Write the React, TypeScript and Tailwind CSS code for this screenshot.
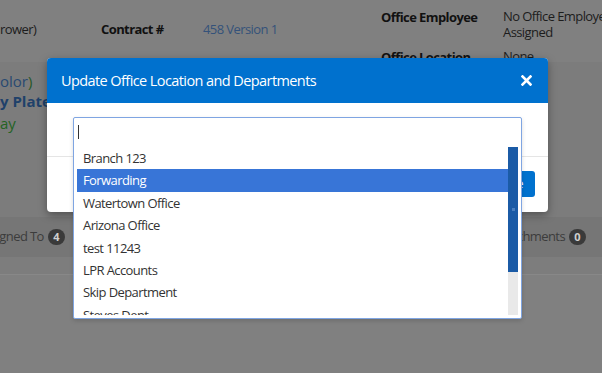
import React from "react";

const departments = [
  "Branch 123",
  "Forwarding",
  "Watertown Office",
  "Arizona Office",
  "test 11243",
  "LPR Accounts",
  "Skip Department",
  "Steves Dept",
  "Main Office",
];

export default function App() {
  return (
    <div className="relative w-[602px] h-[373px] overflow-hidden bg-[#808080] font-['Open_Sans',sans-serif] text-[13px] tracking-[-0.045em]">
      {/* page behind the overlay */}
      <div className="flex items-start h-[62px]">
        <div className="w-[101px] shrink-0 pt-[20px] leading-[18px] text-[#1c1c1c]">rower)</div>
        <div className="w-[102px] shrink-0 pt-[20px] leading-[18px] font-bold text-[#111]">Contract #</div>
        <div className="w-[178px] shrink-0 pt-[20px] leading-[18px] text-[#34527a]">458 Version 1</div>
        <div className="w-[122px] shrink-0 pt-[8px] leading-[18px] font-bold text-[#111]">
          <div>Office Employee</div>
          <div className="mt-[22px]">Office Location</div>
        </div>
        <div className="w-[130px] shrink-0 pt-[8px] leading-[16px] text-[#1c1c1c]">
          <div>No Office Employee Assigned</div>
          <div className="mt-[8px]">None</div>
        </div>
      </div>
      <div className="h-[155px] bg-[#7c7c7c] pt-[9px] text-[15px] tracking-normal">
        <div className="leading-[20px] text-[#294a72]">
          olor<span className="text-[#275827]">)</span>
        </div>
        <div className="leading-[21px] font-bold text-[#1f416a]">y Plate</div>
        <div className="leading-[22px] text-[#246324]">ay</div>
      </div>
      <div className="flex items-center justify-between h-[40px] bg-[#767676] text-[#3c3c3c]">
        <div className="flex items-center gap-[4px] -ml-[9px]">
          <span>signed To</span>
          <span className="flex items-center justify-center w-[17px] h-[16px] rounded-full bg-[#3a3a3a] text-[11px] font-bold text-[#cfcfcf] tracking-normal">4</span>
        </div>
        <div className="flex items-center gap-[4px] mr-[16px]">
          <span>chments</span>
          <span className="flex items-center justify-center w-[17px] h-[16px] rounded-full bg-[#3a3a3a] text-[11px] font-bold text-[#cfcfcf] tracking-normal">0</span>
        </div>
      </div>
      <div className="h-[18px] bg-[#7d7d7d] border-b border-[#888]"></div>

      {/* modal */}
      <div className="absolute left-[47px] top-[58px] w-[501px] h-[154px] rounded-[4px] bg-white shadow-[0_3px_9px_rgba(0,0,0,0.35)]">
        <div className="flex items-center justify-between h-[45px] px-[14px] rounded-t-[4px] bg-[#0071ce] text-white">
          <span className="text-[14.5px]">Update Office Location and Departments</span>
          <svg width="11" height="11" viewBox="0 0 11 11" className="mr-[2px]">
            <path d="M1.5 1.5 L9.5 9.5 M9.5 1.5 L1.5 9.5" stroke="white" strokeWidth="2.6" strokeLinecap="square" />
          </svg>
        </div>
        <div className="h-[54px] border-b border-[#e5e5e5]"></div>
        <div className="flex justify-end pt-[14px] pr-[13px]">
          <button className="h-[26px] px-[12px] rounded-[3px] bg-[#0071ce] text-white text-[13px]">Save</button>
        </div>

        {/* chosen dropdown */}
        <div className="absolute left-[26px] top-[59px] w-[449px] h-[202px] rounded-[2px] border border-[#7fa5e2] bg-white shadow-[0_2px_4px_rgba(0,0,0,0.15)]">
          <div className="flex items-center h-[28px] pl-[4px]">
            <div className="w-[1px] h-[14px] bg-[#333]"></div>
          </div>
          <div className="flex mx-[3px] mt-[1px] h-[168px]">
            <div className="flex-1 overflow-hidden">
              {departments.map((d) => (
                <div
                  key={d}
                  className={
                    d === "Forwarding"
                      ? "h-[22.4px] leading-[22.4px] pl-[6px] bg-[#3875d7] text-white"
                      : "h-[22.4px] leading-[22.4px] pl-[6px] text-[#333]"
                  }
                >
                  {d}
                </div>
              ))}
            </div>
            <div className="flex flex-col w-[10px]">
              <div className="flex items-center justify-center h-[125px] bg-[#1b5ba6]">
                <div className="w-[3px] h-[3px] bg-[#4a7fbf]"></div>
              </div>
              <div className="flex-1 bg-[#e9e9e9]"></div>
            </div>
          </div>
        </div>
      </div>
    </div>
  );
}
